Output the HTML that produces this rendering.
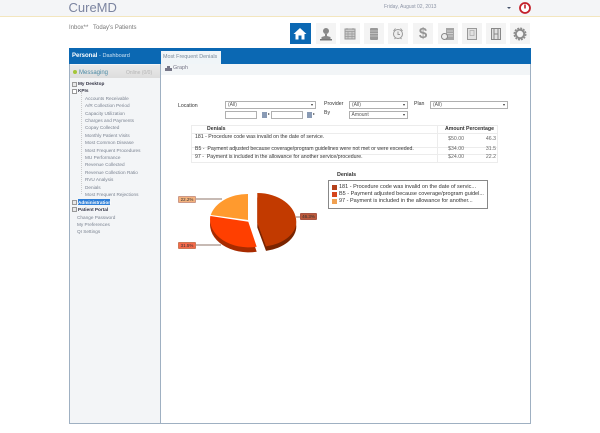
<!DOCTYPE html>
<html><head><meta charset="utf-8"><style>
html,body{margin:0;padding:0;background:#fff}
#p{position:relative;width:600px;height:433px;overflow:hidden;background:#fff;font-family:"Liberation Sans",sans-serif;filter:blur(.35px)}
.a,.t{position:absolute;white-space:nowrap}
.t{font-size:5.2px;line-height:7px;color:#333}
.tr{position:absolute;left:85px;font-size:4.7px;line-height:7px;color:#7a8290;white-space:nowrap}
.b{font-weight:bold;color:#334}
.s{position:absolute;border:1px solid #b0b0b0;background:#fff;box-sizing:border-box;height:8px;font-size:5px;line-height:6px;color:#555;padding-left:2px}
.s:after{content:"";position:absolute;right:2px;top:2px;border:1.5px solid transparent;border-top:2.5px solid #333}
.i{position:absolute;box-sizing:border-box;height:8px;border:1px solid #b0b0b0;background:#fff}
.btn{position:absolute;top:23px;width:20px;height:21px;background:#f4f4f4}
.btn svg{position:absolute;left:0;top:0;width:20px;height:21px}
.r{text-align:right}
.ln{position:absolute;background:#ececec;height:1px}
.x{position:absolute;left:72px;width:3px;height:3px;border:.5px solid #999;background:#e8e8e8}
</style></head><body><div id="p">
<div class="a" style="left:0;top:0;width:600px;height:16px;background:#f4f5f7"></div>
<div class="a" style="left:0;top:16px;width:600px;height:1px;background:#f3e6bf"></div>
<div class="a" style="left:68.500px;top:0;font-size:13px;line-height:16px;color:#7b84a0">CureMD</div>
<div class="t" style="left:384px;top:3.500px;font-size:5px;color:#8b93a5">Friday, August 02, 2013</div>
<div class="a" style="left:507px;top:6.500px;border:2px solid transparent;border-top:2.500px solid #45526a"></div>
<svg class="a" style="left:518px;top:1px" width="14" height="14" viewBox="0 0 14 14"><circle cx="7" cy="7" r="5" fill="#fff" stroke="#c3202a" stroke-width="1.800"/><path d="M7 3.500V7.500" stroke="#c3202a" stroke-width="1.600"/></svg>
<div class="t" style="left:69px;top:24.500px;font-size:6px;color:#777">Inbox**</div>
<div class="t" style="left:93px;top:24.500px;font-size:6px;color:#777">Today's Patients</div>

<div class="btn" style="left:290px;width:21px;background:#0b68b3"><svg viewBox="0 0 20 21"><path d="M10 5L3.500 11H5.500V16.500H8.500V12.500H11.500V16.500H14.500V11H16.500Z" fill="#fff"/></svg></div>
<div class="btn" style="left:316px"><svg viewBox="0 0 20 21"><circle cx="10" cy="8" r="3" fill="#888"/><path d="M9 11h2v2l3.500 1v2.500h-9V14l3.500-1z" fill="#888"/><rect x="4" y="16" width="12" height="1.500" fill="#777"/></svg></div>
<div class="btn" style="left:340px"><svg viewBox="0 0 20 21"><rect x="5" y="6" width="10" height="10" fill="#ccc" stroke="#999"/><path d="M5 8.500H15M7 5V7M13 5V7M5 11H15M5 13.500H15M8 8.500V16M12 8.500V16" stroke="#999" stroke-width=".7"/></svg></div>
<div class="btn" style="left:364px"><svg viewBox="0 0 20 21"><rect x="6" y="5" width="8" height="12" rx="1" fill="#999"/><path d="M6 8H14M6 10.500H14M6 13H14" stroke="#ccc" stroke-width=".7"/></svg></div>
<div class="btn" style="left:388px"><svg viewBox="0 0 20 21"><circle cx="10" cy="11" r="4.500" fill="#eee" stroke="#999"/><path d="M10 8.500V11.500H12M5.500 8L7.500 5.500M14.500 8L12.500 5.500M6.500 16L7.500 15M13.500 16L12.500 15" stroke="#999" fill="none"/></svg></div>
<div class="btn" style="left:413px"><div class="a" style="left:0;width:20px;top:1px;text-align:center;font-size:15px;font-weight:bold;line-height:19px;color:#959595">$</div></div>
<div class="btn" style="left:438px"><svg viewBox="0 0 20 21"><rect x="8" y="5" width="8" height="12" fill="#a5a5a5"/><path d="M9 8H15M9 10.500H15M9 13H15" stroke="#ddd" stroke-width=".8"/><circle cx="6.500" cy="13.500" r="3" fill="#eee" stroke="#888"/></svg></div>
<div class="btn" style="left:462px"><svg viewBox="0 0 20 21"><rect x="5.500" y="5.500" width="9" height="11" fill="#e2e2e2" stroke="#999"/><rect x="8" y="7.500" width="4" height="5" fill="none" stroke="#aaa" stroke-width=".7"/></svg></div>
<div class="btn" style="left:486px"><svg viewBox="0 0 20 21"><rect x="5.500" y="5.500" width="9" height="11" fill="#e2e2e2" stroke="#888"/><path d="M8 5.500V16.500M12 5.500V16.500M8 11H12" stroke="#888"/></svg></div>
<div class="btn" style="left:510px"><svg viewBox="0 0 20 21"><circle cx="10" cy="11" r="4.200" fill="none" stroke="#8c8c8c" stroke-width="2"/><circle cx="10" cy="11" r="5.800" fill="none" stroke="#8c8c8c" stroke-width="1.400" stroke-dasharray="2 1.040"/></svg></div>

<div class="a" style="left:69px;top:48px;width:462px;height:16px;background:#0b68b3"></div>
<div class="a" style="left:72px;top:52px;font-size:6px;line-height:8px;color:#fff"><b>Personal</b> <span style="color:#cfe3f3;font-size:5.600px">- Dashboard</span></div>
<div class="a" style="left:161px;top:51px;width:60px;height:13px;background:#f0f5f8"></div>
<div class="t" style="left:163px;top:53.500px;font-size:5.400px;color:#7a8a9a">Most Frequent Denials</div>

<div class="a" style="left:69px;top:64px;width:92px;height:360px;box-sizing:border-box;background:#f3f5f7;border:solid #9fb0c2;border-width:0 1px 1px 1px"></div>
<div class="a" style="left:160px;top:64px;width:371px;height:360px;box-sizing:border-box;background:#fff;border:solid #9fb0c2;border-width:0 1px 1px 1px"></div>
<div class="a" style="left:161px;top:64px;width:369px;height:11px;background:#f2f5f7"></div>
<div class="a" style="left:70px;top:65px;width:90px;height:13px;background:linear-gradient(#e9e9e9,#dcdcdc)"></div>
<div class="a" style="left:73px;top:70px;width:4px;height:4px;border-radius:50%;background:#a4c639"></div>
<div class="t" style="left:79px;top:69.500px;font-size:6px;color:#4a8aa5">Messaging</div>
<div class="t" style="left:126px;top:69.500px;font-size:5px;color:#b5b5b5">Online (0/0)</div>
<svg class="a" style="left:164px;top:65px" width="9" height="7"><path d="M1 6V3H3V1H6V3H8V6Z" fill="#778"/></svg>
<div class="t" style="left:173px;top:64.500px;font-size:5.400px;color:#778">Graph</div>

<div class="x" style="top:81.500px"></div>
<div class="x" style="top:88.500px;background:#fff"></div>
<div class="x" style="top:199.500px"></div>
<div class="x" style="top:207px"></div>
<div class="a" style="left:81px;top:92px;width:0;height:102px;border-left:1px dotted #ccc"></div>
<div class="tr b" style="left:78px;top:80px">My Desktop</div>
<div class="tr b" style="left:78px;top:87px">KPIs</div>
<div class="tr" style="top:94.500px">Accounts Receivable</div>
<div class="tr" style="top:102px">A/R Collection Period</div>
<div class="tr" style="top:109.500px">Capacity Utilization</div>
<div class="tr" style="top:117px">Charges and Payments</div>
<div class="tr" style="top:124px">Copay Collected</div>
<div class="tr" style="top:131.500px">Monthly Patient Visits</div>
<div class="tr" style="top:139px">Most Common Disease</div>
<div class="tr" style="top:146.500px">Most Frequent Procedures</div>
<div class="tr" style="top:154px">MU Performance</div>
<div class="tr" style="top:161px">Revenue Collected</div>
<div class="tr" style="top:168.500px">Revenue Collection Ratio</div>
<div class="tr" style="top:176px">RVU Analysis</div>
<div class="tr" style="top:183.500px">Denials</div>
<div class="tr" style="top:191px">Most Frequent Rejections</div>
<div class="a" style="left:77.500px;top:199px;width:32px;height:6px;background:#2f7fd8"></div>
<div class="tr" style="left:78px;top:198.500px;font-weight:bold;color:#fff">Administration</div>
<div class="tr b" style="left:78px;top:206px">Patient Portal</div>
<div class="tr" style="left:77px;top:213.500px">Change Password</div>
<div class="tr" style="left:77px;top:221px">My Preferences</div>
<div class="tr" style="left:77px;top:228px">QI Settings</div>

<div class="t" style="left:178px;top:102.500px">Location</div>
<div class="s" style="left:225px;top:101px;width:91px">(All)</div>
<div class="t" style="left:324px;top:101px">Provider</div>
<div class="s" style="left:349px;top:101px;width:59px">(All)</div>
<div class="t" style="left:414px;top:101px">Plan</div>
<div class="s" style="left:430px;top:101px;width:78px">(All)</div>
<div class="i" style="left:225px;top:111px;width:32px"></div>
<div class="a" style="left:262px;top:112px;width:5px;height:6px;background:#8a9bb5"></div>
<div class="a" style="left:268px;top:113px;border:1.500px solid transparent;border-left:2.500px solid #555"></div>
<div class="i" style="left:271px;top:111px;width:32px"></div>
<div class="a" style="left:307px;top:112px;width:5px;height:6px;background:#8a9bb5"></div>
<div class="a" style="left:313px;top:113px;border:1.500px solid transparent;border-left:2.500px solid #555"></div>
<div class="t" style="left:324px;top:110px">By</div>
<div class="s" style="left:349px;top:111px;width:59px;padding-left:1.500px">Amount</div>

<div class="ln" style="left:191px;top:125px;width:306px"></div>
<div class="ln" style="left:191px;top:133px;width:306px"></div>
<div class="ln" style="left:191px;top:147px;width:306px"></div>
<div class="ln" style="left:191px;top:154px;width:306px"></div>
<div class="ln" style="left:191px;top:162px;width:306px"></div>
<div class="a" style="left:191px;top:125px;width:1px;height:38px;background:#ececec"></div>
<div class="a" style="left:437px;top:125px;width:1px;height:38px;background:#ececec"></div>
<div class="a" style="left:497px;top:125px;width:1px;height:38px;background:#ececec"></div>
<div class="t" style="left:207px;top:126px;font-weight:bold">Denials</div>
<div class="t" style="left:445px;top:126px;font-weight:bold">Amount</div>
<div class="t" style="left:466px;top:126px;font-weight:bold">Percentage</div>
<div class="t" style="left:195px;top:133.500px">181 - Procedure code was invalid on the date of service.</div>
<div class="t" style="left:195px;top:146px">B5 -&nbsp; Payment adjusted because coverage/program guidelines were not met or were exceeded.</div>
<div class="t" style="left:195px;top:154px">97 -&nbsp; Payment is included in the allowance for another service/procedure.</div>
<div class="t r" style="left:440px;width:24px;top:136px;color:#666">$50.00</div>
<div class="t r" style="left:470px;width:26px;top:136px;color:#666">46.3</div>
<div class="t r" style="left:440px;width:24px;top:146px;color:#666">$34.00</div>
<div class="t r" style="left:470px;width:26px;top:146px;color:#666">31.5</div>
<div class="t r" style="left:440px;width:24px;top:154px;color:#666">$24.00</div>
<div class="t r" style="left:470px;width:26px;top:154px;color:#666">22.2</div>

<svg class="a" style="left:170px;top:185px" width="160" height="75" viewBox="170 185 160 75">
<path d="M222 199H180M221 245H180M296 217H305" stroke="#6b4a3a" stroke-width=".7"/>
<path transform="translate(0 5)" d="M210.300 216L248.300 221.700L256.700 246.700A38.500 28 0 0 1 210.300 216Z" fill="#a82b00"/>
<path d="M210.300 216L248.300 221.700L256.700 246.700A38.500 28 0 0 1 210.300 216Z" fill="#ff3f00"/>
<path transform="translate(0 4.500)" d="M257.300 193A39 29 0 0 1 296.300 222A39 25 0 0 1 266 246.400L257.300 223Z" fill="#7a2400"/>
<path d="M257.300 193A39 29 0 0 1 296.300 222A39 25 0 0 1 266 246.400L257.300 223Z" fill="#c23a00"/>
<path d="M248 194V220L210.700 215A38 28 0 0 1 248 194Z" fill="#ff9a2e"/>
</svg>
<div class="a" style="left:178px;top:196px;width:18px;height:7px;border-radius:1px;background:#f4b27d;box-sizing:border-box;border:.5px solid #c98;font-size:4.500px;line-height:6px;text-align:center;color:#333">22.2%</div>
<div class="a" style="left:178px;top:242px;width:18px;height:7px;border-radius:1px;background:#f5694a;box-sizing:border-box;border:.5px solid #c75;font-size:4.500px;line-height:6px;text-align:center;color:#333">31.5%</div>
<div class="a" style="left:300px;top:213px;width:17px;height:7px;border-radius:1px;background:#bb5a3c;box-sizing:border-box;border:.5px solid #a54;font-size:4.500px;line-height:6px;text-align:center;color:#333">46.3%</div>

<div class="t" style="left:337px;top:172px;font-weight:bold;font-size:5.400px">Denials</div>
<div class="a" style="left:328px;top:180px;width:160px;height:29px;box-sizing:border-box;border:1px solid #888;background:#fff"></div>
<div class="a" style="left:332px;top:185px;width:5px;height:5px;background:#b5401a"></div>
<div class="a" style="left:332px;top:192px;width:5px;height:5px;background:#d6451c"></div>
<div class="a" style="left:332px;top:199px;width:5px;height:5px;background:#f0a050"></div>
<div class="t" style="left:339px;top:184px;font-size:5.500px">181 - Procedure code was invalid on the date of servic...</div>
<div class="t" style="left:339px;top:191px;font-size:5.500px">B5 - Payment adjusted because coverage/program guidel...</div>
<div class="t" style="left:339px;top:198px;font-size:5.500px">97 - Payment is included in the allowance for another...</div>
</div></body></html>
